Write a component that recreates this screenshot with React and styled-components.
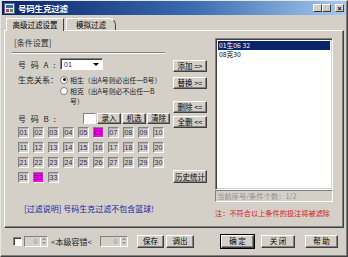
import styled, { createGlobalStyle } from 'styled-components';

const GlobalStyle = createGlobalStyle`
  html, body { margin: 0; padding: 0; background: #d4d0c8; }
  body {
    font-family: "Noto Sans CJK SC", "Liberation Sans", sans-serif;
    font-size: 8px;
    color: #000;
  }
  * { box-sizing: border-box; }
`;

const Window = styled.div`
  width: 348px;
  height: 257px;
  background: #d4d0c8;
  border: 1px solid;
  border-color: #e8e6e0 #404040 #404040 #e8e6e0;
  box-shadow: inset -1px -1px 0 #808080;
  display: flex;
  flex-direction: column;
`;

const TitleBar = styled.div`
  height: 14px;
  margin: 0 1px;
  display: flex;
  align-items: center;
  padding: 0 2px;
  background: linear-gradient(to right, #0a246a, #3a6ab0 55%, #a6caf0);
  color: #fff;
  font-weight: bold;
  font-size: 8.5px;
  letter-spacing: -0.2px;
`;

const TitleText = styled.span`
  margin-left: 3px;
  flex: 1;
`;

const WinBtn = styled.div`
  width: 9px;
  height: 8px;
  margin-left: ${(p) => p.$gap || 0}px;
  background: #d4d0c8;
  border: 1px solid;
  border-color: #fff #404040 #404040 #fff;
  display: flex;
  align-items: center;
  justify-content: center;
  font-size: 7px;
  line-height: 1;
  color: ${(p) => (p.$off ? '#909090' : '#000')};
  font-family: "Liberation Sans", sans-serif;
  font-weight: bold;
`;

const Body = styled.div`
  flex: 1;
  display: flex;
  flex-direction: column;
  padding: 0 3px;
`;

const Tabs = styled.div`
  display: flex;
  margin-top: 3px;
  height: 12px;
  padding-left: 2px;
  position: relative;
  z-index: 1;
`;

const Tab = styled.div`
  width: ${(p) => p.$w}px;
  height: ${(p) => (p.$active ? 13 : 12)}px;
  margin-left: ${(p) => p.$ml || 0}px;
  background: #d4d0c8;
  border: 1px solid;
  border-bottom: none;
  border-color: #fff #404040 #404040 #fff;
  border-top-right-radius: ${(p) => (p.$active ? 1 : 7)}px;
  display: flex;
  align-items: center;
  justify-content: center;
  font-size: 7.5px;
  line-height: 1;
`;

const Panel = styled.div`
  height: 198px;
  border: 1px solid;
  border-color: #fff #404040 #404040 #fff;
  box-shadow: inset -1px -1px 0 #808080;
  display: flex;
`;

const LeftCol = styled.div`
  width: 158px;
  margin-left: 7px;
  display: flex;
  flex-direction: column;
`;

const SectionTitle = styled.div`
  margin-top: 6px;
  height: 12px;
  line-height: 12px;
  padding-left: 2px;
  color: #303030;
`;

const Divider = styled.div`
  margin-top: 3px;
  width: 153px;
  height: 2px;
  border-top: 1px solid #808080;
  border-bottom: 1px solid #fff;
`;

const FieldRow = styled.div`
  margin-top: ${(p) => p.$mt}px;
  height: ${(p) => p.$h || 12}px;
  display: flex;
  align-items: center;
  padding-left: 6px;
`;

const Label = styled.span`
  width: ${(p) => p.$w}px;
  flex: none;
  color: #202020;
  white-space: pre;
  letter-spacing: ${(p) => p.$ls || 0}px;
`;

const Select = styled.div`
  width: 43px;
  height: 12px;
  background: #fff;
  border: 1px solid;
  border-color: #808080 #fff #fff #808080;
  box-shadow: inset 1px 1px 0 #404040;
  display: flex;
  align-items: center;
  padding: 0 3px;
  color: #1a1a8a;
  font-family: "Liberation Sans", sans-serif;
  font-size: 7px;
  justify-content: space-between;
`;

const Caret = styled.span`
  width: 0;
  height: 0;
  border-left: 3px solid transparent;
  border-right: 3px solid transparent;
  border-top: 3px solid #000;
`;

const RadioRow = styled.div`
  display: flex;
  align-items: flex-start;
  margin-top: ${(p) => p.$mt || 0}px;
  margin-left: ${(p) => p.$ml || 0}px;
  line-height: 10px;
  font-size: 6.9px;
  white-space: nowrap;
  color: #202020;
`;

const Radio = styled.span`
  flex: none;
  width: 8px;
  height: 8px;
  margin: 1px 2px 0 0;
  border-radius: 50%;
  background: #fff;
  border: 1px solid #808080;
  display: flex;
  align-items: center;
  justify-content: center;
  &::after {
    content: '';
    width: 3px;
    height: 3px;
    border-radius: 50%;
    background: ${(p) => (p.$checked ? '#000' : 'transparent')};
  }
`;

const TextInput = styled.div`
  width: 14px;
  height: 11px;
  background: #fff;
  border: 1px solid;
  border-color: #808080 #fff #fff #808080;
`;

const Button = styled.div`
  width: ${(p) => p.$w}px;
  height: ${(p) => p.$h || 12}px;
  margin-top: ${(p) => p.$mt || 0}px;
  margin-left: ${(p) => p.$ml || 0}px;
  flex: none;
  background: #d4d0c8;
  border: 1px solid;
  border-color: #fff #404040 #404040 #fff;
  box-shadow: inset -1px -1px 0 #808080${(p) => (p.$default ? ', 0 0 0 1px #000' : '')};
  display: flex;
  align-items: center;
  justify-content: center;
  font-size: 7.5px;
  line-height: 1;
  white-space: pre;
  color: #000;
`;

const Grid = styled.div`
  margin-top: 3px;
  padding-left: 6px;
  display: grid;
  grid-template-columns: repeat(10, 11px);
  grid-auto-rows: 11px;
  gap: 4px;
`;

const Ball = styled.div`
  background: ${(p) => (p.$on ? '#ff00ff' : '#d4d0c8')};
  border: 1px solid;
  border-color: #808080 #fff #fff #808080;
  box-shadow: inset 1px 1px 0 ${(p) => (p.$on ? '#c000c0' : '#b8b4ac')};
  display: flex;
  align-items: center;
  justify-content: center;
  font-family: "Liberation Sans", sans-serif;
  font-size: 7px;
  color: ${(p) => (p.$on ? '#6a006a' : '#1e1e60')};
`;

const Note = styled.div`
  margin-top: 21px;
  height: 10px;
  line-height: 10px;
  padding-left: 12px;
  color: #1c1ca0;
  white-space: nowrap;
`;

const MidCol = styled.div`
  width: 34px;
  margin-left: 3px;
  display: flex;
  flex-direction: column;
`;

const RightCol = styled.div`
  width: 118px;
  margin-left: 8px;
  display: flex;
  flex-direction: column;
`;

const ListBox = styled.div`
  margin-top: 7px;
  height: 152px;
  background: #fff;
  border: 1px solid;
  border-color: #808080 #fff #fff #808080;
  box-shadow: inset 1px 1px 0 #404040, inset -1px -1px 0 #d4d0c8;
  padding: 2px;
  font-size: 6.8px;
`;

const ListItem = styled.div`
  height: 9px;
  line-height: 9px;
  padding-left: 1px;
  background: ${(p) => (p.$sel ? '#0a246a' : 'transparent')};
  color: ${(p) => (p.$sel ? '#fff' : '#000')};
  white-space: pre;
  overflow: hidden;
`;

const Status = styled.div`
  height: 12px;
  border: 1px solid;
  border-color: #808080 #fff #fff #808080;
  color: #909090;
  font-size: 7.3px;
  line-height: 10px;
  padding-left: 1px;
`;

const Warn = styled.div`
  margin-top: 6px;
  height: 10px;
  line-height: 10px;
  color: #d41818;
  font-size: 7.2px;
  white-space: nowrap;
`;

const BottomBar = styled.div`
  flex: 1;
  display: flex;
  align-items: center;
  padding-bottom: 2px;
`;

const Check = styled.div`
  width: 9px;
  height: 9px;
  margin-left: 9px;
  background: #fff;
  border: 1px solid;
  border-color: #808080 #fff #fff #808080;
  box-shadow: inset 1px 1px 0 #404040;
`;

const Spinner = styled.div`
  width: ${(p) => p.$w}px;
  height: 11px;
  margin-left: ${(p) => p.$ml}px;
  border: 1px solid;
  border-color: #808080 #fff #fff #808080;
  display: flex;
  align-items: center;
  justify-content: flex-end;
  font-family: "Liberation Sans", sans-serif;
  font-size: 6.5px;
  color: #909090;
`;

const SpinArrows = styled.div`
  width: 7px;
  height: 9px;
  margin-left: 3px;
  border-left: 1px solid #fff;
  display: flex;
  flex-direction: column;
  align-items: center;
  justify-content: space-around;
  &::before, &::after {
    content: '';
    border-left: 2px solid transparent;
    border-right: 2px solid transparent;
  }
  &::before { border-bottom: 2px solid #909090; }
  &::after { border-top: 2px solid #909090; }
`;

const Tolerance = styled.span`
  margin-left: 3px;
  width: 49px;
  flex: none;
  color: #202020;
  white-space: nowrap;
`;

const AppIcon = () => (
  <svg width="11" height="11" viewBox="0 0 11 11">
    <rect x="0.5" y="0.5" width="10" height="10" fill="#e8e8e8" stroke="#5a6a8a" />
    <rect x="2" y="2" width="7" height="3" fill="#3a64b8" />
    <rect x="2" y="6" width="3" height="3" fill="#c84040" />
    <rect x="6" y="6" width="3" height="3" fill="#48a048" />
  </svg>
);

const balls = Array.from({ length: 33 }, (_, i) => String(i + 1).padStart(2, '0'));
const picked = ['06', '32'];

export default function App() {
  return (
    <>
      <GlobalStyle />
      <Window>
        <TitleBar>
          <AppIcon />
          <TitleText>号码生克过滤</TitleText>
          <WinBtn>_</WinBtn>
          <WinBtn $off>□</WinBtn>
          <WinBtn $gap={4}>×</WinBtn>
        </TitleBar>
        <Body>
          <Tabs>
            <Tab $w={58} $active>高级过滤设置</Tab>
            <Tab $w={50} $ml={2}>模拟过滤</Tab>
          </Tabs>
          <Panel>
            <LeftCol>
              <SectionTitle>[条件设置]</SectionTitle>
              <Divider />
              <FieldRow $mt={4}>
                <Label $w={42} $ls={1.5}>号 码 A :</Label>
                <Select>
                  <span>01</span>
                  <Caret />
                </Select>
              </FieldRow>
              <FieldRow $mt={4} $h={11}>
                <Label $w={42}>生克关系：</Label>
                <RadioRow>
                  <Radio $checked />
                  <span>相生（出A号则必出任一B号）</span>
                </RadioRow>
              </FieldRow>
              <RadioRow $mt={1} $ml={48}>
                <Radio />
                <span>
                  相克（出A号则必不出任一B
                  <br />
                  号）
                </span>
              </RadioRow>
              <FieldRow $mt={6}>
                <Label $w={65} $ls={1.5}>号 码 B :</Label>
                <TextInput />
                <Button $w={24} $h={11} $ml={1}>录入</Button>
                <Button $w={24} $h={11} $ml={1}>机选</Button>
                <Button $w={23} $h={11} $ml={1}>清除</Button>
              </FieldRow>
              <Grid>
                {balls.map((b) => (
                  <Ball key={b} $on={picked.includes(b)}>{b}</Ball>
                ))}
              </Grid>
              <Note>[过滤说明] 号码生克过滤不包含篮球!</Note>
            </LeftCol>
            <MidCol>
              <Button $w={34} $mt={29}>添加 =&gt;</Button>
              <Button $w={34} $mt={5}>替换 &gt;=</Button>
              <Button $w={34} $mt={12}>删除 &lt;=</Button>
              <Button $w={34} $mt={3}>全删 &lt;&lt;</Button>
              <Button $w={34} $h={13} $mt={42}>历史统计</Button>
            </MidCol>
            <RightCol>
              <ListBox>
                <ListItem $sel>01生06 32</ListItem>
                <ListItem>08克30</ListItem>
              </ListBox>
              <Status>当前序号/条件个数：1/2</Status>
              <Warn>注：不符合以上条件的投注将被滤除</Warn>
            </RightCol>
          </Panel>
          <BottomBar>
            <Check />
            <Spinner $w={24} $ml={2}>
              0<SpinArrows />
            </Spinner>
            <Tolerance>&lt;本级容错&lt;</Tolerance>
            <Spinner $w={28} $ml={0}>
              0<SpinArrows />
            </Spinner>
            <Button $w={27} $h={13} $ml={9}>保存</Button>
            <Button $w={28} $h={13} $ml={2}>调出</Button>
            <Button $w={33} $h={13} $ml={27} $default>确 定</Button>
            <Button $w={34} $h={13} $ml={7}>关 闭</Button>
            <Button $w={33} $h={13} $ml={10}>帮 助</Button>
          </BottomBar>
        </Body>
      </Window>
    </>
  );
}
